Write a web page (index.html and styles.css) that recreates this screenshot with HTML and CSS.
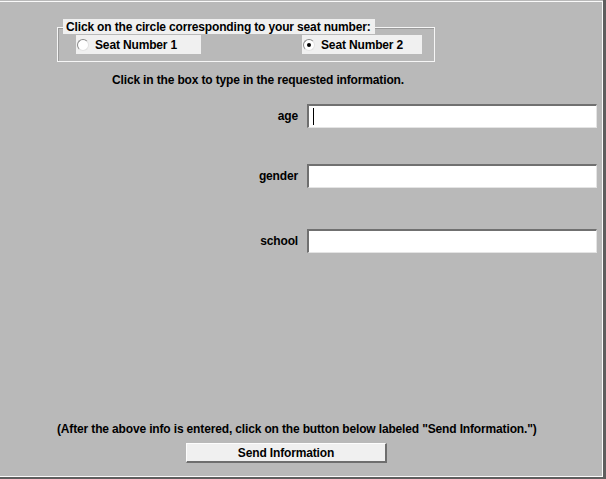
FILE: index.html
```html
<!DOCTYPE html>
<html>
<head>
<meta charset="utf-8">
<link rel="stylesheet" href="styles.css">
</head>
<body>
<div class="panel">
  <div class="group">
    <div class="legend">Click on the circle corresponding to your seat number:</div>
    <div class="radios">
      <div class="radio radio-one"><span class="dot"></span><span class="radio-text">Seat Number 1</span></div>
      <div class="radio radio-two"><span class="dot checked"></span><span class="radio-text">Seat Number 2</span></div>
    </div>
  </div>
  <div class="instruction">Click in the box to type in the requested information.</div>
  <div class="row row-age">
    <div class="label">age</div>
    <div class="input"><span class="caret"></span></div>
  </div>
  <div class="row row-gender">
    <div class="label">gender</div>
    <div class="input"></div>
  </div>
  <div class="row row-school">
    <div class="label">school</div>
    <div class="input"></div>
  </div>
  <div class="note">(After the above info is entered, click on the button below labeled "Send Information.")</div>
  <div class="button">Send Information</div>
</div>
</body>
</html>
```
FILE: styles.css
```css
html, body {
  margin: 0;
  padding: 0;
  background: #5e5e5e;
}
body {
  width: 606px;
  height: 479px;
  overflow: hidden;
  font-family: "Liberation Sans", Arial, sans-serif;
  font-size: 12px;
  font-weight: bold;
  color: #000;
  letter-spacing: -0.15px;
}
.panel {
  box-sizing: border-box;
  width: 603px;
  height: 476px;
  margin-top: 1px;
  background: #b9b9b9;
  border-top: 1px solid #fafafa;
  border-right: 1px solid #fafafa;
  border-bottom: 1px solid #fafafa;
  box-shadow: 0 -1px 0 #b9b9b9;
  display: flex;
  flex-direction: column;
  line-height: 15px;
}
.group {
  box-sizing: border-box;
  margin: 25px 0 0 57px;
  width: 378px;
  height: 35px;
  border: 1px solid #f6f6f6;
  box-shadow: inset 1px 1px 0 #9a9a9a;
}
.legend {
  box-sizing: border-box;
  width: 312px;
  height: 15px;
  margin: -9px 0 0 5px;
  padding: 1px 0 0 3px;
  background: #f0f0f0;
  line-height: 15px;
}
.radios {
  display: flex;
  margin-top: 1px;
}
.radio {
  display: flex;
  align-items: center;
  height: 19px;
  background: #f0f0f0;
  box-sizing: border-box;
  padding-left: 1px;
}
.radio-text {
  padding-top: 2px;
}
.radio-one {
  margin-left: 18px;
  width: 125px;
}
.radio-two {
  margin-left: 101px;
  width: 120px;
}
.dot {
  box-sizing: border-box;
  width: 12px;
  height: 12px;
  margin-top: 1px;
  border-radius: 50%;
  background: #fff;
  border: 1px solid;
  border-color: #8a8a8a #e2e2e2 #e2e2e2 #8a8a8a;
  margin-right: 6px;
  display: flex;
  align-items: center;
  justify-content: center;
}
.dot.checked::after {
  content: "";
  width: 4px;
  height: 4px;
  border-radius: 50%;
  background: #000;
}
.instruction {
  margin: 11px 0 0 112px;
}
.row {
  display: grid;
  grid-template-columns: 298px 290px;
  column-gap: 9px;
  align-items: center;
}
.row-age { margin-top: 16px; }
.row-gender { margin-top: 36px; }
.row-school { margin-top: 41px; }
.label {
  text-align: right;
  padding-top: 1px;
}
.input {
  box-sizing: border-box;
  height: 24px;
  background: #fff;
  border-style: solid;
  border-width: 2px 1px 1px 2px;
  border-color: #707070 #e4e4e4 #e4e4e4 #707070;
  display: flex;
  align-items: center;
  padding-left: 4px;
}
.caret {
  width: 1px;
  height: 17px;
  background: #000;
}
.note {
  margin: 169px 0 0 57px;
}
.button {
  box-sizing: border-box;
  margin: 6px 0 0 186px;
  width: 201px;
  height: 20px;
  background: #f0f0f0;
  border-style: solid;
  border-width: 1px 2px 2px 1px;
  border-color: #fdfdfd #6e6e6e #6e6e6e #fdfdfd;
  text-align: center;
  line-height: 18px;
}
```
